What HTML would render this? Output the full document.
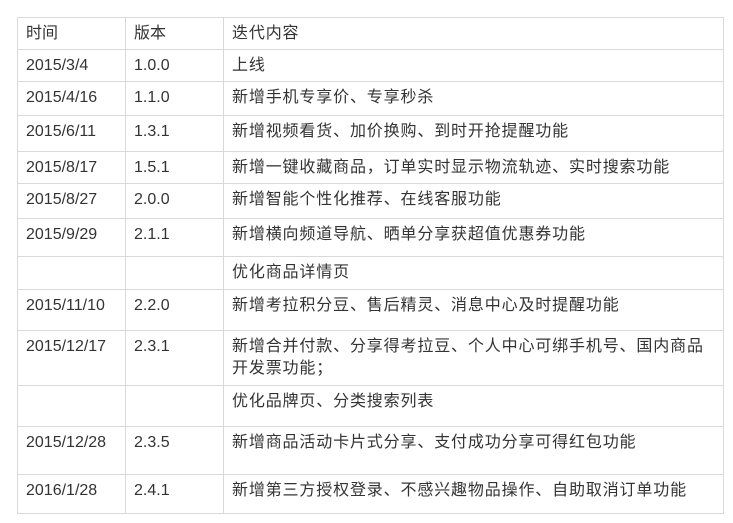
<!DOCTYPE html>
<html><head><meta charset="utf-8"><style>
body{margin:0;background:#fff;}
.t{position:absolute;left:17px;top:17px;border-collapse:collapse;font-family:"Liberation Sans","Noto Sans CJK SC",sans-serif;font-size:16px;color:#333;table-layout:fixed;}
.t td{border:1px solid #d9d9d9;vertical-align:top;padding:5px 0 0 8px;line-height:22px;box-sizing:border-box;white-space:nowrap;overflow:hidden;}
.t td:nth-child(3){letter-spacing:0.85px;}
</style></head><body>
<table class="t">
<colgroup><col style="width:108px"><col style="width:98px"><col style="width:500px"></colgroup>
<tr style="height:32px"><td>时间</td><td>版本</td><td>迭代内容</td></tr>
<tr style="height:32px"><td>2015/3/4</td><td>1.0.0</td><td>上线</td></tr>
<tr style="height:34px"><td>2015/4/16</td><td>1.1.0</td><td>新增手机专享价、专享秒杀</td></tr>
<tr style="height:36px"><td>2015/6/11</td><td>1.3.1</td><td>新增视频看货、加价换购、到时开抢提醒功能</td></tr>
<tr style="height:32px"><td>2015/8/17</td><td>1.5.1</td><td>新增一键收藏商品，订单实时显示物流轨迹、实时搜索功能</td></tr>
<tr style="height:35px"><td>2015/8/27</td><td>2.0.0</td><td>新增智能个性化推荐、在线客服功能</td></tr>
<tr style="height:38px"><td>2015/9/29</td><td>2.1.1</td><td>新增横向频道导航、晒单分享获超值优惠券功能</td></tr>
<tr style="height:33px"><td></td><td></td><td>优化商品详情页</td></tr>
<tr style="height:41px"><td>2015/11/10</td><td>2.2.0</td><td>新增考拉积分豆、售后精灵、消息中心及时提醒功能</td></tr>
<tr style="height:55px"><td>2015/12/17</td><td>2.3.1</td><td>新增合并付款、分享得考拉豆、个人中心可绑手机号、国内商品<br>开发票功能；</td></tr>
<tr style="height:41px"><td></td><td></td><td>优化品牌页、分类搜索列表</td></tr>
<tr style="height:48px"><td>2015/12/28</td><td>2.3.5</td><td>新增商品活动卡片式分享、支付成功分享可得红包功能</td></tr>
<tr style="height:39px"><td>2016/1/28</td><td>2.4.1</td><td>新增第三方授权登录、不感兴趣物品操作、自助取消订单功能</td></tr>
</table>
</body></html>
